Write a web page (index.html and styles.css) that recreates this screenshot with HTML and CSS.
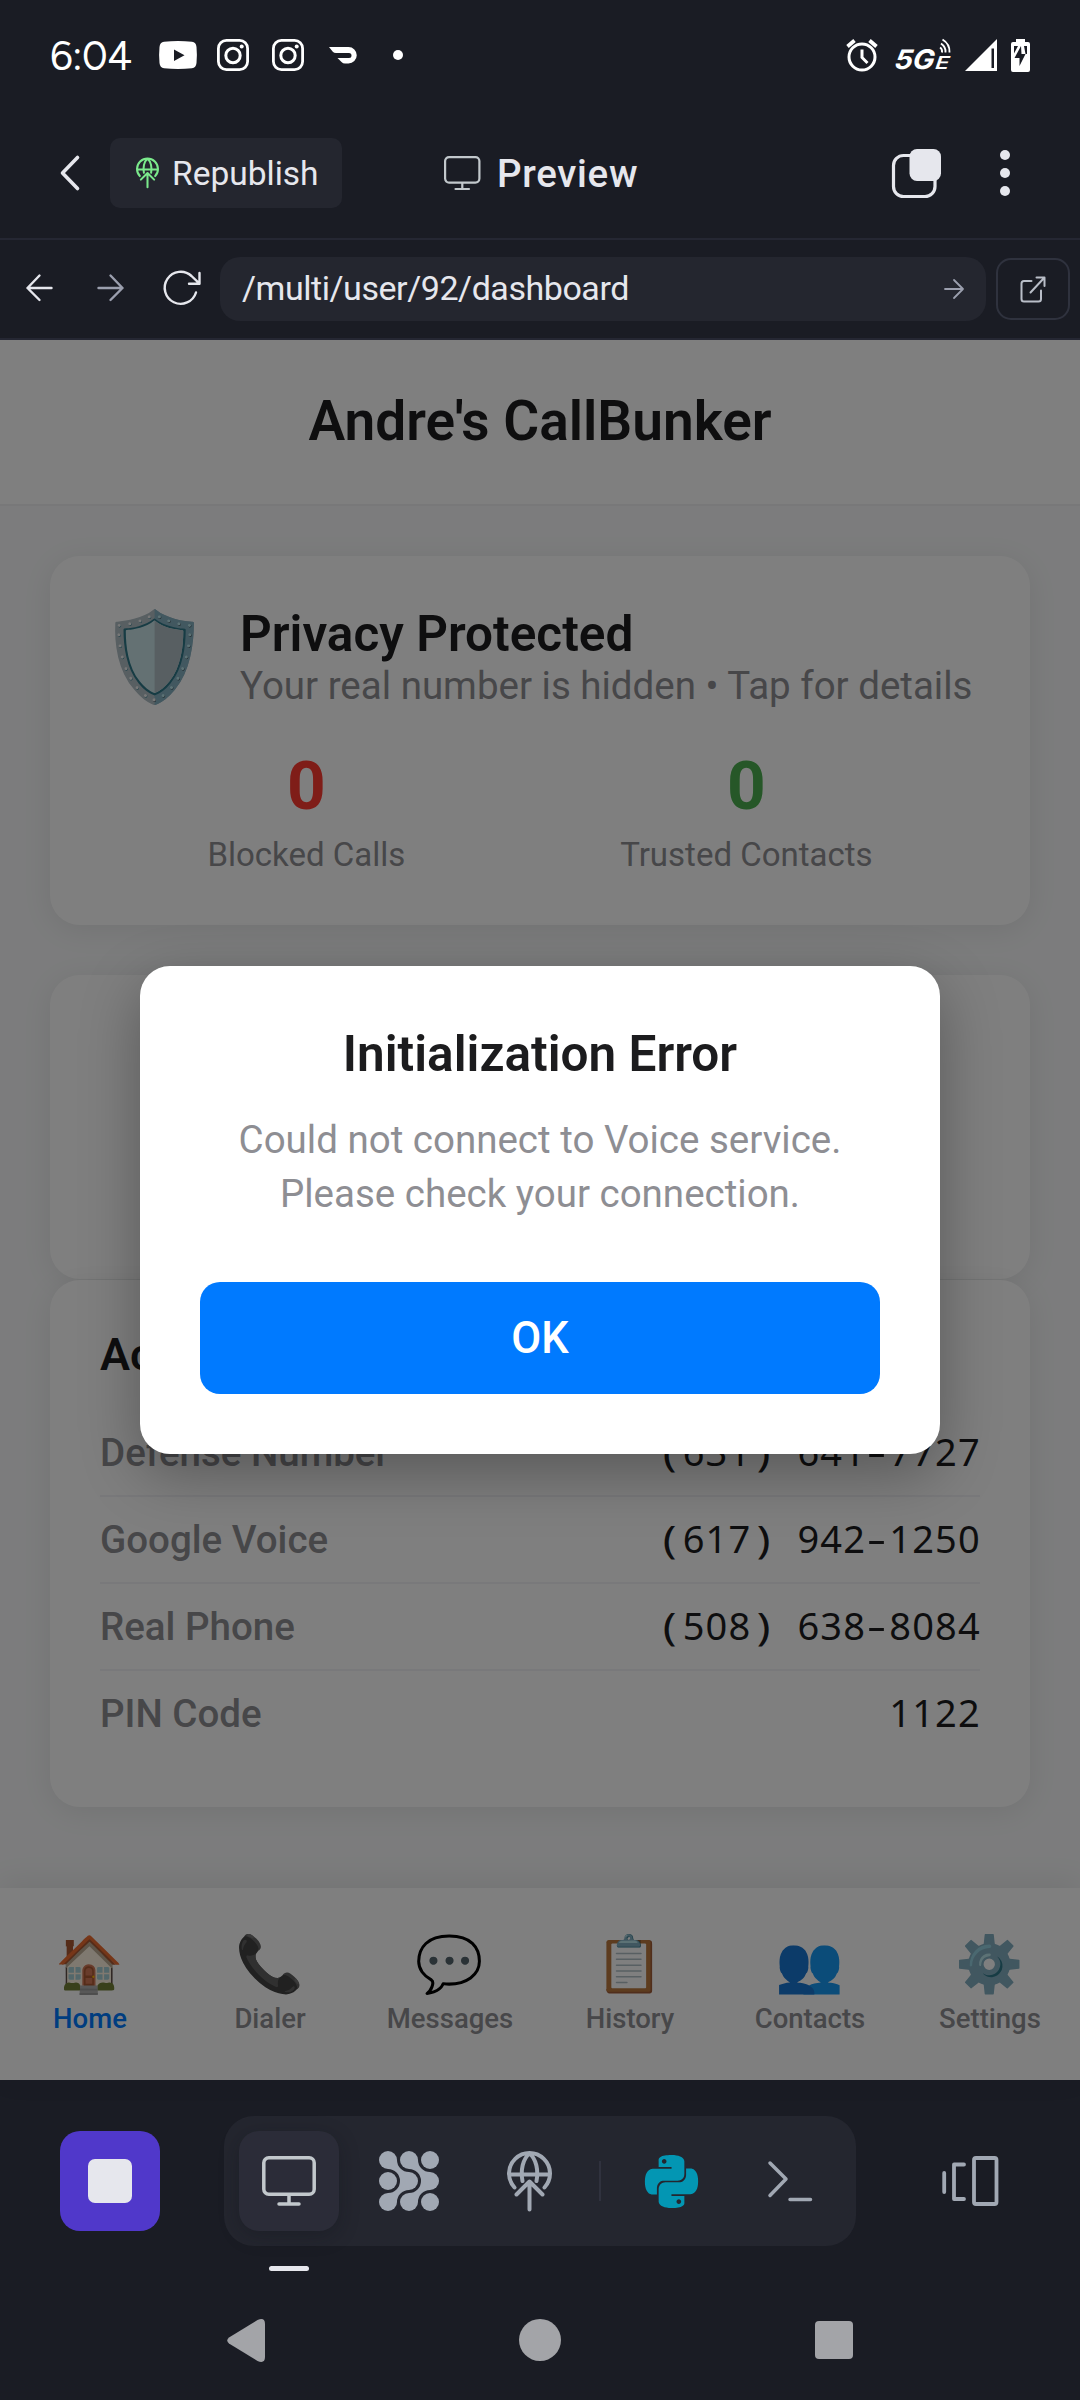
FILE: index.html
```
<!DOCTYPE html>
<html lang="en">
<head>
<meta charset="utf-8">
<title>Preview</title>
<link rel="stylesheet" href="styles.css">
</head>
<body>
<div class="phone">

  <div class="status">
    <span class="clock">6:04</span>
    <svg class="s-youtube" width="38" height="28" viewBox="0 0 38 28"><path fill="#fff" fill-rule="evenodd" d="M5 .8Q19-.8 33 .8Q37 1.3 37.5 6Q38.3 14 37.5 22Q37 26.700 33 27.200Q19 28.800 5 27.200Q1 26.700.500 22Q-.300 14 .500 6Q1 1.300 5 .800ZM15 8.500V20L25.500 14.200Z"/></svg>
    <svg class="s-insta" width="32" height="32" viewBox="0 0 32 32"><g fill="none" stroke="#fff" stroke-width="2.800"><rect x="1.400" y="1.400" width="29.200" height="29.200" rx="8"/><circle cx="16" cy="16.500" r="7.200" stroke-width="3"/></g><circle cx="24.700" cy="7.500" r="2" fill="#fff"/></svg>
    <svg class="s-insta2" width="32" height="32" viewBox="0 0 32 32"><g fill="none" stroke="#fff" stroke-width="2.800"><rect x="1.400" y="1.400" width="29.200" height="29.200" rx="8"/><circle cx="16" cy="16.500" r="7.200" stroke-width="3"/></g><circle cx="24.700" cy="7.500" r="2" fill="#fff"/></svg>
    <svg class="s-dash" width="28" height="17" viewBox="0 0 28 17"><path fill="#fff" d="M0 0H19.500A8.200 8.200 0 0 1 19.500 16.500H16Q14 16.500 12.500 15L8.500 11H20A2.300 2.300 0 0 0 20 6H7Q5 6 3.800 4.800Z"/></svg>
    <span class="s-dot"></span>
    <span class="grow"></span>
    <svg class="s-alarm" width="32" height="34" viewBox="0 0 32 34"><g fill="none" stroke="#fff"><circle cx="16" cy="19" r="13" stroke-width="3"/><path stroke-width="3" d="M16 11.500V19.500L21.500 25"/><path stroke-width="3.800" d="M1.500 8.500 8.500 2.500M30.500 8.500 23.500 2.500"/></g></svg>
    <svg class="s-net" width="58" height="34" viewBox="0 0 58 34" fill="#fff"><g transform="translate(3.500 0) skewX(-7)"><text class="g5" x="0" y="31" textLength="40" lengthAdjust="spacingAndGlyphs">5G</text><text class="ge" x="41" y="31" textLength="14" lengthAdjust="spacingAndGlyphs">E</text></g><g fill="none" stroke="#fff" stroke-width="1.900"><path d="M48.500 1.500Q56 6 55.500 14.500M47 5.500Q52 9 51.500 14.500M46 9.500Q48.500 11 48 14.500"/></g></svg>
    <svg class="s-signal" width="32" height="32" viewBox="0 0 32 32"><path fill="#fff" fill-rule="evenodd" d="M0 32 32 0V32ZM26.500 9.500V29H29V9.500Z"/></svg>
    <svg class="s-batt" width="19" height="33" viewBox="0 0 19 33"><path fill="#fff" d="M5 0H14V3H17Q19 3 19 5V31Q19 33 17 33H2Q0 33 0 31V5Q0 3 2 3H5Z"/><path fill="#1a1c24" d="M10 7 3.500 19H8.500V27L14.500 15H10.500ZM3 7H7L3 14.500ZM13 7H16V15H14.500Z"/></svg>
  </div>

  <div class="toolbar">
    <svg class="back" width="20" height="36" viewBox="0 0 20 36"><path fill="none" stroke="#e6e7ed" stroke-width="3.600" stroke-linecap="round" stroke-linejoin="round" d="M17.500 2.500 2.500 18 17.500 33.500"/></svg>
    <div class="republish">
      <svg width="23" height="32" viewBox="0 0 45 61"><use href="#deploy"/></svg>
      <span>Republish</span>
    </div>
    <div class="heading">
      <svg width="37" height="35" viewBox="0 0 37 35"><g fill="none" stroke="#c2c8cc" stroke-width="2.200" stroke-linecap="round"><rect x="1.100" y="1.100" width="34.300" height="25.500" rx="4"/><path d="M18.300 27V33M11.500 33H25"/></g></svg>
      <span>Preview</span>
    </div>
    <span class="grow"></span>
    <svg class="windows" width="49" height="49" viewBox="0 0 49 49"><rect x="1.500" y="6.500" width="41.500" height="41" rx="10" fill="none" stroke="#e6e7ed" stroke-width="3.200"/><rect x="17.500" y="0" width="31.500" height="32" rx="7.500" fill="#e6e7ed"/></svg>
    <div class="more"><i></i><i></i><i></i></div>
  </div>

  <div class="urlbar">
    <svg class="nav-back" width="27" height="28" viewBox="0 0 27 28"><path fill="none" stroke="#e6e7ed" stroke-width="2.400" stroke-linecap="round" stroke-linejoin="round" d="M25.500 14H1.500M13.500 1.500 1.500 14 13.500 26"/></svg>
    <svg class="nav-fwd" width="27" height="28" viewBox="0 0 27 28"><path fill="none" stroke="#9b9fae" stroke-width="2.400" stroke-linecap="round" stroke-linejoin="round" d="M1.500 14H25.500M13.500 1.500 25.500 14 13.500 26"/></svg>
    <svg class="nav-reload" width="38" height="36" viewBox="0 0 38 36"><path fill="none" stroke="#e6e7ed" stroke-width="2.400" stroke-linecap="round" stroke-linejoin="round" d="M32 22.500A16 16 0 1 1 27.500 6L35.500 13.700M35.500 3V13.700H25"/></svg>
    <div class="address">
      <span>/multi/user/92/dashboard</span>
      <svg width="21" height="20" viewBox="0 0 21 20"><path fill="none" stroke="#9b9fae" stroke-width="1.800" stroke-linecap="round" stroke-linejoin="round" d="M1 10H19M10 1 19 10 10 19"/></svg>
    </div>
    <div class="open">
      <svg width="26" height="27" viewBox="0 0 26 27"><path fill="none" stroke="#b9bec8" stroke-width="2" stroke-linecap="round" stroke-linejoin="round" d="M11.500 5H4Q1.500 5 1.500 7.500V23Q1.500 25.500 4 25.500H18.500Q21 25.500 21 23V14.500M10.500 16.500 24.500 1.500M16.500 1.500H24.500V10"/></svg>
    </div>
  </div>

  <div class="app">
    <div class="app-header">Andre's CallBunker</div>
    <div class="content">
      <div class="card privacy">
        <div class="privacy-top">
          <span class="shield">🛡️</span>
          <div>
            <div class="p-title">Privacy Protected</div>
            <div class="p-sub">Your real number is hidden • Tap for details</div>
          </div>
        </div>
        <div class="stats">
          <div class="stat blocked"><b>0</b><span>Blocked Calls</span></div>
          <div class="stat trusted"><b>0</b><span>Trusted Contacts</span></div>
        </div>
      </div>
      <div class="card empty"></div>
      <div class="card account">
        <div class="a-title">Account Info</div>
        <div class="row"><span>Defense Number</span><span class="num"><i class="paren">(</i>631<i class="close">)</i><i>&nbsp;</i>641<i class="dash">-</i>7727</span></div>
        <div class="row"><span>Google Voice</span><span class="num"><i class="paren">(</i>617<i class="close">)</i><i>&nbsp;</i>942<i class="dash">-</i>1250</span></div>
        <div class="row"><span>Real Phone</span><span class="num"><i class="paren">(</i>508<i class="close">)</i><i>&nbsp;</i>638<i class="dash">-</i>8084</span></div>
        <div class="row"><span>PIN Code</span><span class="num">1122</span></div>
      </div>
    </div>
    <div class="tabs">
      <div class="tab active"><span class="emoji">🏠</span><span>Home</span></div>
      <div class="tab"><span class="emoji">📞</span><span>Dialer</span></div>
      <div class="tab"><span class="emoji">💬</span><span>Messages</span></div>
      <div class="tab"><span class="emoji">📋</span><span>History</span></div>
      <div class="tab"><span class="emoji">👥</span><span>Contacts</span></div>
      <div class="tab"><span class="emoji">⚙️</span><span>Settings</span></div>
    </div>
    <div class="overlay">
      <div class="modal">
        <div class="m-title">Initialization Error</div>
        <div class="m-text">Could not connect to Voice service.<br>Please check your connection.</div>
        <div class="ok">OK</div>
      </div>
    </div>
  </div>

  <div class="dock">
    <div class="stop"><i></i></div>
    <div class="tools">
      <div class="tile">
        <svg width="54" height="51" viewBox="0 0 54 51"><g fill="none" stroke="#c2c8cc" stroke-width="3.500" stroke-linecap="round"><rect x="1.800" y="1.800" width="50.400" height="36.500" rx="5"/><path d="M27 39V47M17 48H37"/></g></svg>
        <span class="indicator"></span>
      </div>
      <svg class="t-grid" width="60" height="60" viewBox="0 0 60 60" fill="#a1a8b3"><circle cx="9" cy="9" r="9"/><circle cx="9" cy="30" r="9"/><circle cx="9" cy="51" r="9"/><circle cx="30" cy="9" r="9"/><circle cx="30" cy="30" r="9"/><circle cx="30" cy="51" r="9"/><circle cx="51" cy="9" r="9"/><circle cx="51" cy="30" r="9"/><circle cx="51" cy="51" r="9"/><path d="M18 9A12 12 0 0 0 30 21V39A12 12 0 0 0 18 51H9V42A12 12 0 0 0 21 30A12 12 0 0 0 9 18V9ZM39 9A12 12 0 0 0 51 21V39A12 12 0 0 0 39 51H30V42A12 12 0 0 0 42 30A12 12 0 0 0 30 18V9Z"/></svg>
      <svg class="t-deploy" width="45" height="61" viewBox="0 0 45 61">
        <g id="deploy" fill="none" stroke="currentColor" stroke-width="4" stroke-linecap="round" stroke-linejoin="round"><path d="M7.500 36.500A20.500 20.500 0 1 1 37.500 36.500M2 23.500H43M15.500 30C13.500 20 15.500 8 22.500 2.500C29.500 8 31.500 20 29.500 30M22.500 31V58.500M9.500 43.500 22.500 30.500 35.500 43.500"/></g>
      </svg>
      <span class="divider"></span>
      <svg class="t-python" width="53" height="53" viewBox="0 0 24 24" fill="#0396b3"><path d="M14.250.180l.9.2.73.260.590.300.450.320.340.340.250.340.160.330.100.300.040.260.020.200-.010.130V8.500l-.050.630-.130.550-.210.460-.260.380-.300.310-.330.250-.350.190-.350.140-.330.100-.300.070-.260.040-.210.020H8.770l-.690.050-.590.140-.500.220-.410.270-.330.320-.270.350-.200.360-.150.370-.100.350-.070.320-.040.270-.020.210v3.060H3.170l-.210-.030-.280-.070-.320-.120-.350-.180-.360-.260-.360-.360-.350-.460-.320-.590-.280-.730-.210-.880-.140-1.050-.050-1.230.060-1.220.160-1.040.240-.870.320-.710.360-.570.400-.440.420-.330.420-.240.400-.160.360-.100.320-.050.240-.010h.160l.060.010h8.160v-.830H6.180l-.010-2.750-.020-.370.050-.340.110-.310.170-.280.250-.260.310-.230.380-.200.440-.180.510-.150.580-.120.640-.100.710-.060.770-.040.840-.020 1.270.050zm-6.300 1.980l-.230.330-.080.410.080.410.230.340.330.220.410.090.410-.090.330-.220.230-.340.080-.410-.080-.410-.230-.330-.330-.220-.410-.090-.410.090zm13.090 3.950l.280.060.320.120.350.180.360.270.360.350.350.470.320.590.280.730.210.880.140 1.040.050 1.230-.060 1.230-.160 1.040-.240.860-.320.710-.360.570-.400.450-.420.330-.420.240-.400.160-.360.090-.320.050-.240.020-.160-.010h-8.220v.820h5.840l.010 2.760.020.360-.050.340-.110.310-.170.290-.250.250-.310.240-.380.200-.440.170-.510.150-.580.130-.640.090-.710.070-.770.040-.840.010-1.270-.040-1.070-.140-.900-.200-.730-.250-.590-.300-.450-.330-.340-.340-.250-.340-.160-.330-.100-.300-.040-.250-.020-.200.010-.130v-5.340l.050-.640.130-.540.210-.460.260-.380.300-.320.330-.240.350-.200.350-.140.330-.100.300-.060.260-.040.210-.020.130-.010h5.840l.690-.050.590-.140.500-.210.410-.280.330-.320.270-.350.200-.360.150-.360.100-.350.070-.320.040-.280.020-.210V6.070h2.090l.140.010zm-6.470 14.250l-.230.330-.080.410.080.410.230.330.330.230.410.080.410-.080.330-.230.230-.330.080-.410-.080-.410-.230-.330-.330-.230-.410-.080-.410.080z"/></svg>
      <svg class="t-shell" width="45" height="41" viewBox="0 0 45 41"><path fill="none" stroke="#a1a8b3" stroke-width="3.500" stroke-linecap="round" stroke-linejoin="round" d="M2 2 18 18 2 34.500M22 38.500H42.500"/></svg>
    </div>
    <svg class="panes" width="57" height="50" viewBox="0 0 57 50"><g fill="none" stroke="#a1a8b3" stroke-width="3.800" stroke-linecap="round" stroke-linejoin="round"><path d="M2.200 17V36M22 8.500H12V43H22"/><rect x="32" y="2" width="22.500" height="46" rx="2"/></g></svg>
  </div>

  <div class="sysnav">
    <svg width="38" height="43" viewBox="0 0 38 43"><path fill="#a3a4a8" d="M30.500 1Q38-2 38 5V38Q38 45 30.500 42L2 24.500Q-1.500 21.500 2 18.500Z"/></svg>
    <i class="circle"></i>
    <i class="square"></i>
  </div>
</div>
</body>
</html>
```
FILE: styles.css
```
* { box-sizing: border-box; }
body { margin: 0; background: #1a1c24; font-family: Roboto, sans-serif; }
svg { display: block; flex: none; overflow: visible; }
i { font-style: normal; }
.grow { flex: 1; }
.phone { width: 1080px; height: 2400px; display: flex; flex-direction: column; overflow: hidden; }

/* system status bar */
.status { height: 110px; display: flex; align-items: center; padding: 0 50px 0 50px; flex: none; }
.clock { font: 400 40px/48px Figtree, Lato, sans-serif; color: #fff; width: 109px; letter-spacing: -.4px; margin-top: 1px; }
.s-insta { margin-left: 20px; }
.s-insta2 { margin-left: 23px; }
.s-dash { margin-left: 25px; }
.s-dot { width: 10px; height: 10px; border-radius: 50%; background: #fff; margin-left: 36px; }
.s-net { margin-left: 16px; }
.g5 { font: italic 700 27px Inter, sans-serif; }
.ge { font: italic 600 18px Inter, sans-serif; }
.s-signal { margin-left: 13px; }
.s-batt { margin-left: 14px; }

/* workspace header */
.toolbar { height: 130px; display: flex; align-items: center; padding: 0 70px 2px 60px; border-bottom: 2px solid #252733; flex: none; }
.republish { margin-left: 30px; width: 232px; height: 70px; border-radius: 10px; background: #24262f; display: flex; align-items: center; padding-left: 26px; font-size: 33.500px; color: #e6e7ed; }
.republish svg { color: #7bea8c; }
.republish span { margin-left: 13px; letter-spacing: 0; }
.heading { margin-left: 102px; display: flex; align-items: center; font-size: 38.500px; font-weight: 500; color: #e6e7ed; }
.heading span { margin-left: 16px; letter-spacing: .7px; }
.more { margin-left: 59px; display: flex; flex-direction: column; gap: 8px; }
.more i { width: 10px; height: 10px; border-radius: 50%; background: #e6e7ed; }

.urlbar { height: 100px; display: flex; align-items: center; padding: 0 10px 0 26px; border-bottom: 2px solid #252733; flex: none; }
.nav-back, .nav-fwd, .nav-reload { margin-bottom: 2px; }
.nav-fwd { margin-left: 44px; }
.nav-reload { margin-left: 40px; }
.address { margin-left: 18px; width: 766px; height: 64px; border-radius: 20px; background: #24262f; display: flex; align-items: center; justify-content: space-between; padding: 0 21px 0 22px; font-size: 34px; letter-spacing: -.450px; color: #e6e7ed; }
.address span { margin-bottom: 2px; }
.open { margin-left: 10px; width: 74px; height: 62px; border: 2px solid #2f323e; border-radius: 15px; display: flex; align-items: center; justify-content: center; }

/* previewed app */
.app { height: 1740px; position: relative; display: flex; flex-direction: column; background: #f8f9fa; flex: none; }
.app-header { height: 166px; background: #fff; border-bottom: 2px solid #f0f0f2; text-align: center; font-size: 55px; font-weight: 600; line-height: 163px; color: #1c1c1e; flex: none; }
.content { padding: 50px 50px 0; height: 1382px; flex: none; }
.card { background: #fff; border-radius: 30px; box-shadow: 0 5px 30px rgba(0,0,0,.08); }
.privacy { height: 369px; padding: 49px 50px 0; }
.privacy-top { display: flex; height: 104px; align-items: center; }
.shield { font-size: 87.500px; line-height: 104px; width: 109px; margin-right: 31px; }
.p-title { font-size: 49.500px; font-weight: 600; line-height: 56px; color: #1c1c1e; }
.p-sub { font-size: 38.500px; line-height: 47px; color: #8e8e93; white-space: nowrap; }
.stats { display: flex; height: 130px; margin-top: 36px; justify-content: space-around; }
.stat { display: flex; flex-direction: column; align-items: center; font-size: 33px; color: #8e8e93; }
.stat b { font-size: 67.500px; line-height: 82px; }
.stat span { line-height: 38px; margin-top: 9px; }
.blocked b { color: #ff3b30; }
.trusted b { color: #4caf50; }
.empty { height: 304px; margin-top: 50px; }
.account { height: 527px; margin-top: 1px; padding: 45px 50px 0; }
.a-title { font-size: 45px; font-weight: 600; line-height: 59px; height: 85px; color: #1c1c1e; }
.row { height: 87px; border-bottom: 2px solid #f2f2f7; display: flex; justify-content: space-between; line-height: 86px; font-size: 38.500px; font-weight: 500; color: #8e8e93; }
.row:last-child { border: 0; }
.num { display: flex; font-family: "Noto Sans", sans-serif; font-size: 38px; font-weight: 400; line-height: 83px; color: #1c1c1e; letter-spacing: 1.200px; margin-right: -1px; }
.num i { width: 23px; text-align: center; letter-spacing: 0; }
.num .paren { transform: translateX(-2px) scaleX(1.2); }
.num .close { transform: translateX(1px) scaleX(1.2); }
.num .dash { transform: translateX(-1px) scaleX(1.6); }
.tabs { height: 192px; background: #fff; display: flex; box-shadow: 0 -5px 30px rgba(0,0,0,.08); padding-top: 40px; position: relative; }
.tab { width: 180px; display: flex; flex-direction: column; align-items: center; font-size: 27.500px; font-weight: 500; line-height: 32px; color: #8e8e93; }
.emoji { font-size: 55px; line-height: 72px; margin: 0 2px 3px 0; }
.active { color: #007aff; }

.overlay { position: absolute; inset: 0; background: rgba(0,0,0,.5); display: flex; align-items: center; justify-content: center; }
.modal { width: 800px; height: 488px; background: #fff; border-radius: 30px; box-shadow: 0 20px 60px rgba(0,0,0,.3); padding: 59px 60px; text-align: center; }
.m-title { font-size: 49.500px; font-weight: 600; line-height: 58px; color: #1c1c1e; }
.m-text { margin-top: 30px; font-size: 38.500px; line-height: 54px; color: #8e8e93; }
.ok { margin-top: 61px; height: 112px; border-radius: 20px; background: #007aff; color: #fff; font-size: 43.500px; font-weight: 500; line-height: 113px; }

/* workspace dock */
.dock { height: 200px; display: flex; align-items: flex-start; padding: 36px 0 0 60px; flex: none; }
.stop { width: 100px; height: 100px; border-radius: 20px; background: #5038ca; margin-top: 15px; display: flex; align-items: center; justify-content: center; }
.stop i { width: 44px; height: 44px; border-radius: 7px; background: #e6e7ed; }
.tools { margin-left: 64px; width: 632px; height: 130px; border-radius: 30px; background: #24262f; display: flex; align-items: center; padding-left: 15px; }
.tile { width: 100px; height: 100px; border-radius: 20px; background: #2b2c38; display: flex; align-items: center; justify-content: center; position: relative; box-shadow: 0 5px 20px rgba(14,16,24,.3); }
.indicator { position: absolute; left: 30px; top: 135px; width: 40px; height: 5px; border-radius: 3px; background: #e6e7ed; }
.t-grid { margin-left: 40px; }
.t-deploy { margin-left: 68px; color: #a1a8b3; }
.divider { margin-left: 47px; width: 2px; height: 40px; background: #30323e; }
.t-python { margin-left: 44px; margin-top: 1px; }
.t-shell { margin-left: 70px; }
.panes { margin: 40px 0 0 86px; }

/* system navigation */
.sysnav { display: flex; align-items: center; height: 120px; padding-left: 227px; }
.circle { width: 42px; height: 42px; border-radius: 50%; background: #a3a4a8; margin-left: 254px; }
.square { width: 38px; height: 38px; border-radius: 4px; background: #a3a4a8; margin-left: 254px; }
```
